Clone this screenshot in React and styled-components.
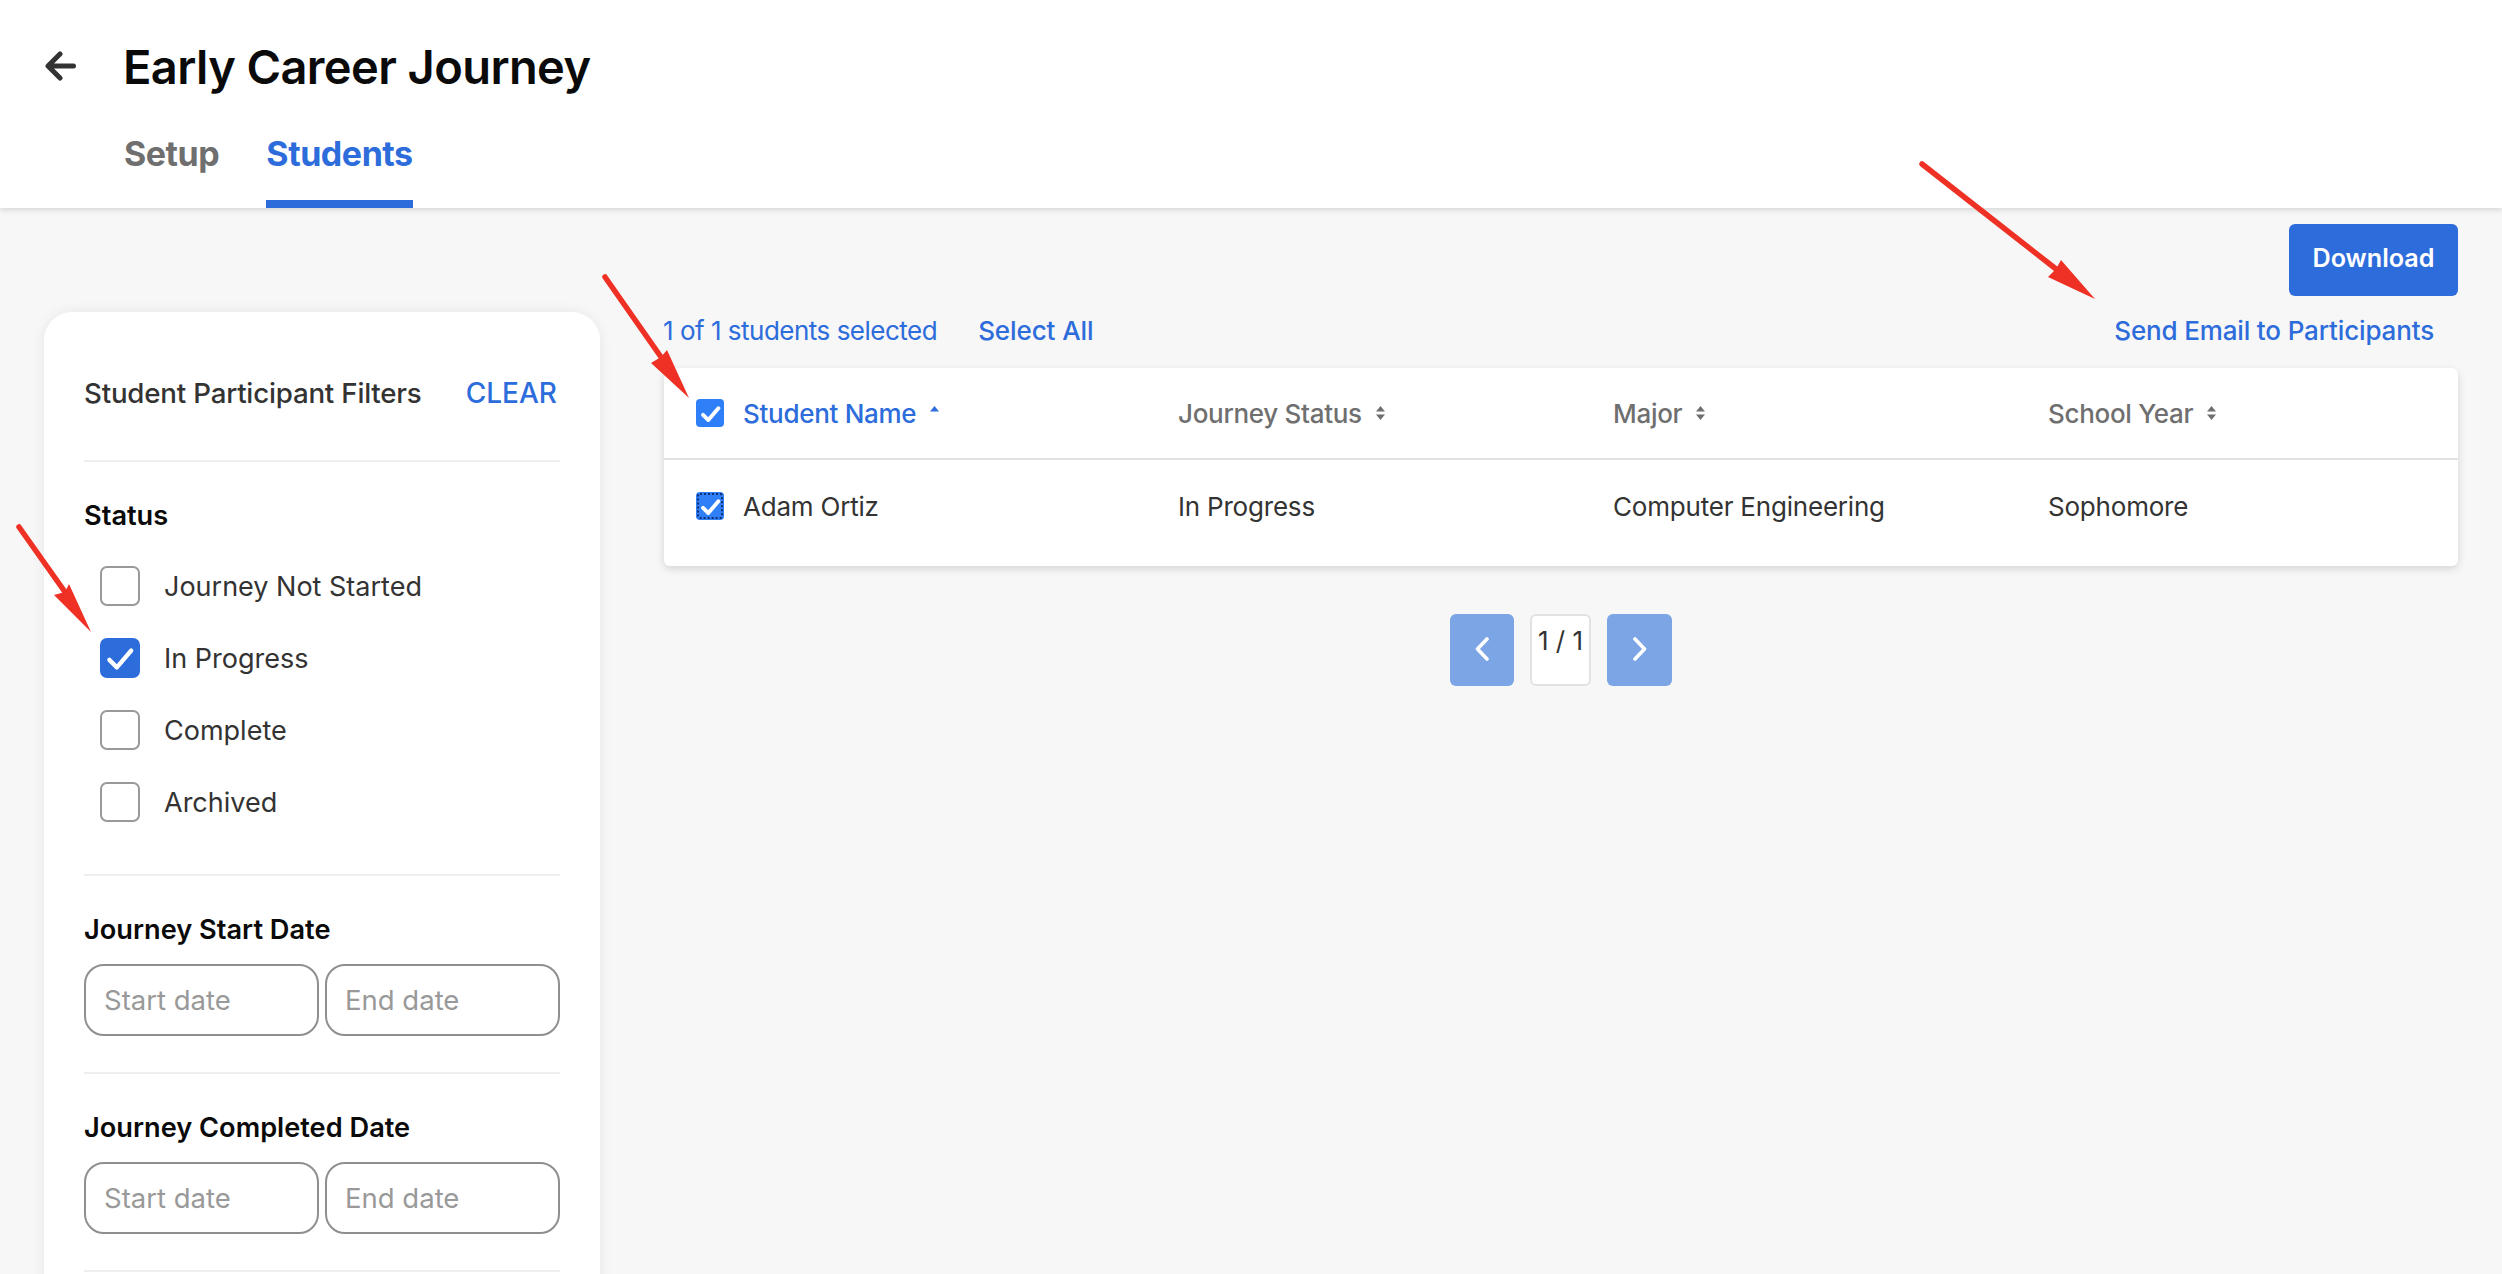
import React from 'react';
import styled, { createGlobalStyle } from 'styled-components';

const GlobalStyle = createGlobalStyle`
  * {
    box-sizing: border-box;
  }
  html,
  body {
    margin: 0;
    height: 100%;
    overflow: hidden;
    background: #f7f7f7;
    font-family: Inter, 'Liberation Sans', sans-serif;
    color: #333;
  }
`;

const blue = '#2d6cdb';

const Page = styled.div`
  position: relative;
  width: 100%;
  height: 1274px;
  overflow: hidden;
  background: #f7f7f7;
`;
const Header = styled.header`
  height: 208px;
  background: #fff;
  box-shadow: 0 2px 6px rgba(0, 0, 0, 0.14);
  position: relative;
`;
const TitleRow = styled.div`
  height: 132px;
  display: flex;
  align-items: center;
  padding-left: 45px;
  gap: 48px;
`;
const BackButton = styled.div`
  display: flex;
  width: 31px;
  height: 30px;
  color: #333;
`;
const Title = styled.h1`
  margin: 0 0 0 -1px;
  font-size: 47px;
  font-weight: 600;
  letter-spacing: -0.6px;
  color: #0a0a0a;
  white-space: nowrap;
`;
const Tabs = styled.nav`
  display: flex;
  gap: 47px;
  padding-left: 124px;
`;
const Tab = styled.div`
  height: 76px;
  padding-top: 2px;
  line-height: 40px;
  font-size: 34px;
  font-weight: 700;
  letter-spacing: -0.45px;
  color: ${(p) => (p.$active ? blue : '#6f6f6f')};
  border-bottom: 8px solid ${(p) => (p.$active ? blue : 'transparent')};
`;
const Body = styled.div`
  display: flex;
  padding: 0 44px;
`;
const Sidebar = styled.aside`
  width: 556px;
  flex-shrink: 0;
  height: 1200px;
  margin-top: 104px;
  padding: 0 40px;
  background: #fff;
  border-radius: 28px;
  box-shadow: 0 0 14px rgba(0, 0, 0, 0.07);
`;
const SidebarHead = styled.div`
  display: flex;
  align-items: center;
  justify-content: space-between;
  height: 150px;
  padding: 14px 3px 0 0;
  border-bottom: 2px solid #eee;
`;
const SidebarTitle = styled.div`
  font-size: 27.7px;
  font-weight: 500;
  letter-spacing: -0.2px;
  color: #333;
`;
const ClearLink = styled.div`
  font-size: 28px;
  font-weight: 500;
  color: ${blue};
`;
const Section = styled.section`
  padding: 37px 0 36px;
  border-bottom: 2px solid #eee;
`;
const SectionLabel = styled.div`
  font-size: 27.2px;
  line-height: 34px;
  font-weight: 600;
  color: #0a0a0a;
`;
const CheckList = styled.div`
  display: flex;
  flex-direction: column;
  gap: 32px;
  margin-top: 33px;
  padding: 0 0 16px 16px;
`;
const CheckRow = styled.label`
  display: flex;
  align-items: center;
  gap: 24px;
  font-size: 27px;
  color: #333;
`;
const FilterBox = styled.span`
  display: flex;
  align-items: center;
  justify-content: center;
  width: 40px;
  height: 40px;
  border-radius: 7px;
  background: ${(p) => (p.$checked ? blue : '#fff')};
  border: 2px solid ${(p) => (p.$checked ? blue : '#999')};
  color: #fff;
`;
const DateRow = styled.div`
  display: flex;
  gap: 6px;
  margin-top: 17px;
`;
const DateInput = styled.input`
  flex: 1;
  width: 235px;
  min-width: 0;
  height: 72px;
  padding: 0 18px;
  border: 2px solid #8f8f8f;
  border-radius: 20px;
  background: #fff;
  font-family: inherit;
  font-size: 27.5px;
  &::placeholder {
    color: #999;
    opacity: 1;
  }
`;
const Main = styled.main`
  flex: 1;
  min-width: 0;
  margin-left: 64px;
  padding-top: 16px;
`;
const Toolbar = styled.div`
  display: flex;
  justify-content: flex-end;
`;
const DownloadButton = styled.button`
  width: 169px;
  height: 72px;
  padding-bottom: 5px;
  border: 0;
  border-radius: 6px;
  background: ${blue};
  color: #fff;
  font-family: inherit;
  font-size: 25.2px;
  font-weight: 600;
`;
const SelectRow = styled.div`
  display: flex;
  align-items: center;
  height: 40px;
  margin: 15px 0 17px;
  padding-right: 24px;
  font-size: 26px;
  color: ${blue};
`;
const SelectCount = styled.span`
  margin-left: -1px;
  letter-spacing: -0.5px;
  line-height: 38px;
`;
const SelectAll = styled.span`
  margin-left: 41px;
  font-weight: 500;
  letter-spacing: -0.1px;
  line-height: 38px;
`;
const SendEmail = styled.span`
  margin-left: auto;
  font-weight: 500;
  letter-spacing: -0.15px;
  line-height: 38px;
`;
const Table = styled.div`
  padding-bottom: 14px;
  background: #fff;
  border-radius: 6px;
  box-shadow: 0 3px 8px rgba(0, 0, 0, 0.14);
`;
const Row = styled.div`
  display: grid;
  grid-template-columns: 482px 435px 435px 1fr;
  align-items: center;
  height: 92px;
  padding-left: 32px;
  font-size: 26px;
  letter-spacing: -0.2px;
  border-bottom: ${(p) => (p.$head ? '2px solid #e2e2e2' : '0')};
`;
const NameCell = styled.div`
  display: flex;
  align-items: center;
  gap: 19px;
`;
const HeadCell = styled.div`
  display: flex;
  align-items: center;
  gap: 14px;
  font-weight: 500;
  letter-spacing: -0.3px;
  color: ${(p) => (p.$active ? blue : '#6f6f6f')};
`;
const TableBox = styled.span`
  display: flex;
  align-items: center;
  justify-content: center;
  width: 28px;
  height: 28px;
  border-radius: 4px;
  background: #2f7ff8;
  color: #fff;
  outline: ${(p) => (p.$focused ? '2px dotted #10306e' : '0')};
  outline-offset: -3px;
`;
const Pagination = styled.div`
  display: flex;
  justify-content: center;
  gap: 16px;
  margin-top: 48px;
`;
const PageButton = styled.div`
  display: flex;
  align-items: center;
  justify-content: center;
  width: ${(p) => p.$width}px;
  height: 72px;
  padding-bottom: 2px;
  border-radius: 6px;
  background: #7ba5e5;
  color: #fff;
`;
const PageCount = styled.div`
  width: 61px;
  height: 72px;
  padding-top: 9px;
  border: 2px solid #e2e2e2;
  border-radius: 6px;
  background: #fff;
  font-size: 26px;
  line-height: 32px;
  text-align: center;
  color: #333;
`;
const Annotation = styled.svg`
  position: absolute;
  left: 0;
  top: 0;
  width: 2502px;
  height: 1274px;
  pointer-events: none;
`;

const Check = ({ size, weight }) => (
  <svg width={size} height={size} viewBox="0 0 24 24" fill="none">
    <path
      d="M3.5 13.5 9.5 19.5 21 6"
      stroke="currentColor"
      strokeWidth={weight}
      strokeLinecap="round"
      strokeLinejoin="round"
    />
  </svg>
);

const SortIcon = ({ asc }) => (
  <svg width="9" height="14" viewBox="0 0 9 14" fill="currentColor">
    <path d="M4.5 0 9 5.5H0Z" />
    {!asc && <path d="M4.5 14 0 8.5H9Z" />}
  </svg>
);

const Chevron = ({ dir }) => (
  <svg width="14" height="24" viewBox="0 0 14 24" fill="none">
    <path
      d={dir === 'left' ? 'M12 2 2.5 12 12 22' : 'M2 2 11.5 12 2 22'}
      stroke="currentColor"
      strokeWidth="3.6"
      strokeLinecap="round"
      strokeLinejoin="round"
    />
  </svg>
);

const RedArrow = ({ tail, tip, barbA, barbB, neck }) => (
  <g>
    <line
      x1={tail[0]}
      y1={tail[1]}
      x2={neck[0]}
      y2={neck[1]}
      stroke="#ee3124"
      strokeWidth="5.5"
      strokeLinecap="round"
    />
    <polygon
      points={[tip, barbA, neck, barbB].map((p) => p.join(',')).join(' ')}
      fill="#ee3124"
    />
  </g>
);

const statuses = [
  { label: 'Journey Not Started' },
  { label: 'In Progress', checked: true },
  { label: 'Complete' },
  { label: 'Archived' },
];

const DateFilter = ({ label }) => (
  <Section>
    <SectionLabel>{label}</SectionLabel>
    <DateRow>
      <DateInput placeholder="Start date" />
      <DateInput placeholder="End date" />
    </DateRow>
  </Section>
);

const App = () => {
  return (
    <Page>
      <GlobalStyle />
      <Header>
        <TitleRow>
          <BackButton>
            <svg width="31" height="30" viewBox="0 0 31 30" fill="none">
              <path
                d="M28.5 15H4M15 3 3 15 15 27"
                stroke="currentColor"
                strokeWidth="5"
                strokeLinecap="round"
                strokeLinejoin="round"
              />
            </svg>
          </BackButton>
          <Title>Early Career Journey</Title>
        </TitleRow>
        <Tabs>
          <Tab>Setup</Tab>
          <Tab $active>Students</Tab>
        </Tabs>
      </Header>
      <Body>
        <Sidebar>
          <SidebarHead>
            <SidebarTitle>Student Participant Filters</SidebarTitle>
            <ClearLink>CLEAR</ClearLink>
          </SidebarHead>
          <Section>
            <SectionLabel>Status</SectionLabel>
            <CheckList>
              {statuses.map((s) => (
                <CheckRow key={s.label}>
                  <FilterBox $checked={s.checked}>
                    {s.checked && <Check size={30} weight={3.4} />}
                  </FilterBox>
                  {s.label}
                </CheckRow>
              ))}
            </CheckList>
          </Section>
          <DateFilter label="Journey Start Date" />
          <DateFilter label="Journey Completed Date" />
        </Sidebar>
        <Main>
          <Toolbar>
            <DownloadButton>Download</DownloadButton>
          </Toolbar>
          <SelectRow>
            <SelectCount>1 of 1 students selected</SelectCount>
            <SelectAll>Select All</SelectAll>
            <SendEmail>Send Email to Participants</SendEmail>
          </SelectRow>
          <Table>
            <Row $head>
              <NameCell>
                <TableBox>
                  <Check size={21} weight={4.4} />
                </TableBox>
                <HeadCell $active>
                  Student Name <SortIcon asc />
                </HeadCell>
              </NameCell>
              <HeadCell>
                Journey Status <SortIcon />
              </HeadCell>
              <HeadCell>
                Major <SortIcon />
              </HeadCell>
              <HeadCell>
                School Year <SortIcon />
              </HeadCell>
            </Row>
            <Row>
              <NameCell>
                <TableBox $focused>
                  <Check size={21} weight={4.4} />
                </TableBox>
                Adam Ortiz
              </NameCell>
              <div>In Progress</div>
              <div>Computer Engineering</div>
              <div>Sophomore</div>
            </Row>
          </Table>
          <Pagination>
            <PageButton $width={64}>
              <Chevron dir="left" />
            </PageButton>
            <PageCount>1 / 1</PageCount>
            <PageButton $width={65}>
              <Chevron dir="right" />
            </PageButton>
          </Pagination>
        </Main>
      </Body>
      <Annotation viewBox="0 0 2502 1274">
        <RedArrow tail={[19, 527]} tip={[91, 632]} barbA={[69, 584]} barbB={[54, 595]} neck={[65, 592]} />
        <RedArrow tail={[605, 277]} tip={[689, 398]} barbA={[667, 350]} barbB={[651, 363]} neck={[661, 357]} />
        <RedArrow tail={[1922, 164]} tip={[2095, 299]} barbA={[2061, 260]} barbB={[2048, 277]} neck={[2056, 269]} />
      </Annotation>
    </Page>
  );
};

export default App;
